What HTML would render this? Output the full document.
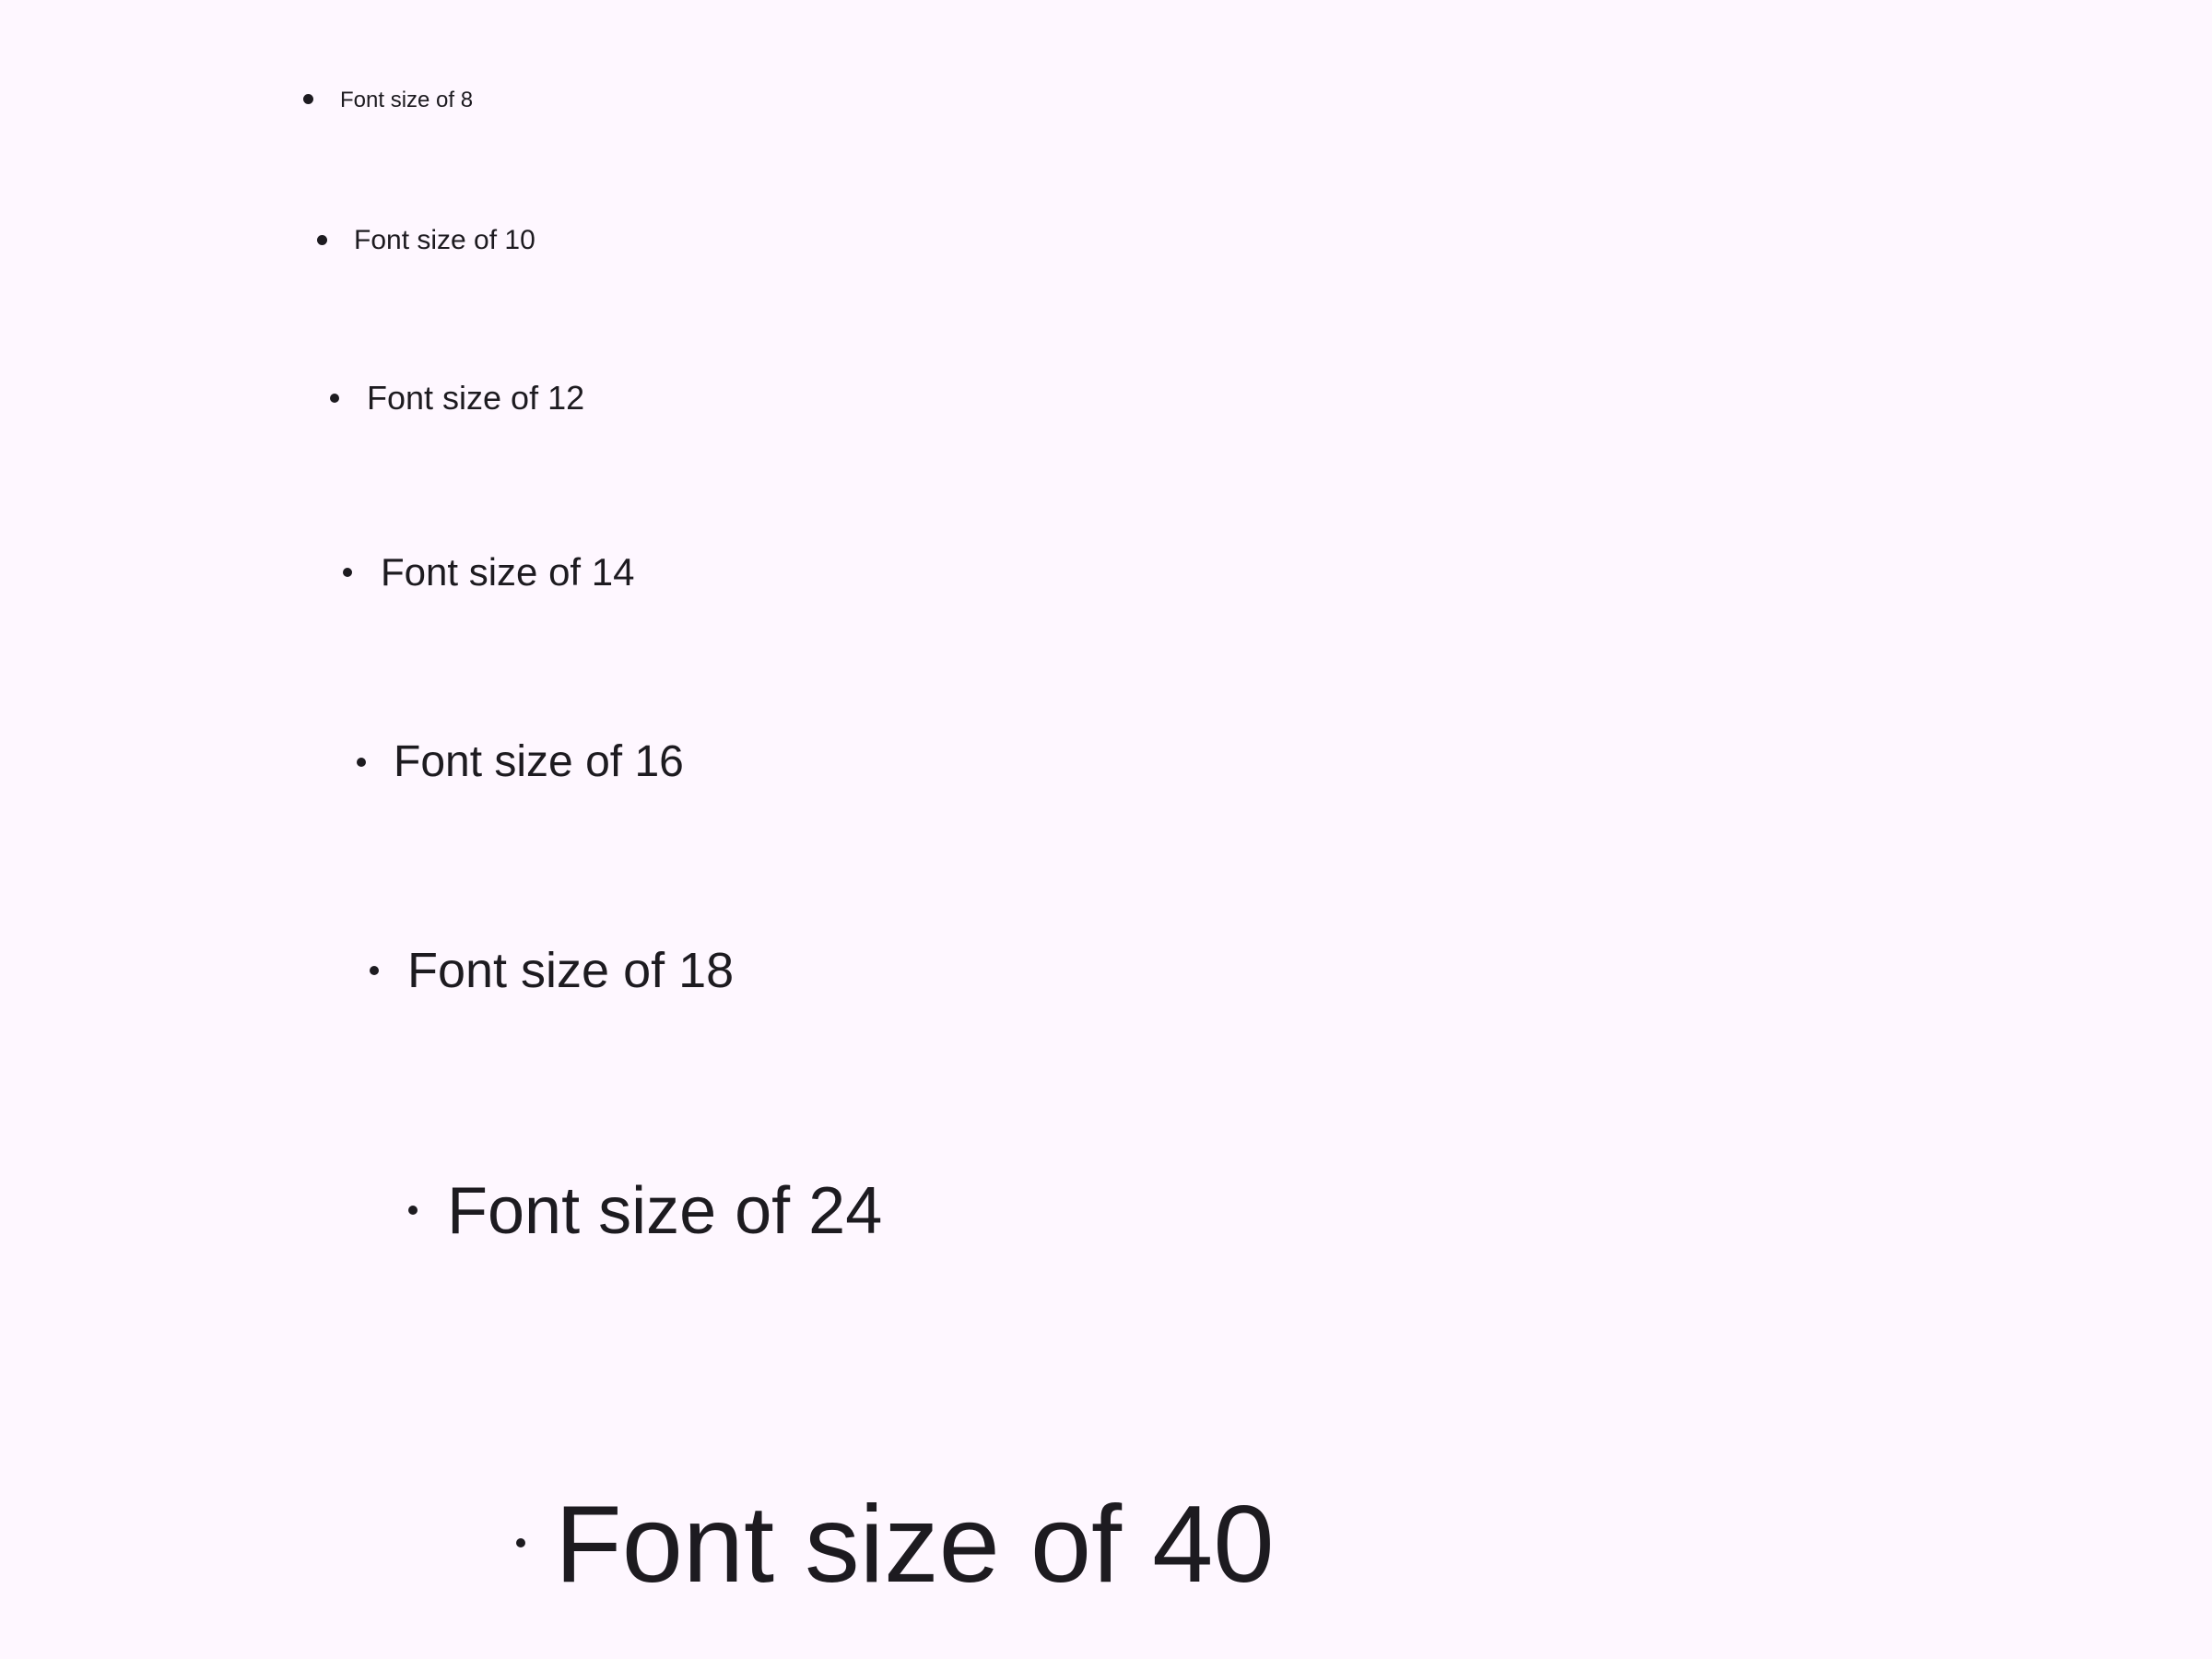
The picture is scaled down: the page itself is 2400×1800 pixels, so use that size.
<!DOCTYPE html>
<html><head><meta charset="utf-8"><style>
html,body{margin:0;padding:0;width:2400px;height:1800px;background:#fef7ff;overflow:hidden}
.t{position:absolute;font-family:"Liberation Sans",sans-serif;color:#1d1b20;line-height:1;white-space:nowrap}
.d{position:absolute;border-radius:50%;background:#1d1b20}
</style></head><body>
<div class="d" style="left:329px;top:102px;width:11px;height:11px"></div>
<div class="t" style="left:369px;top:97px;font-size:24px">Font size of 8</div>

<div class="d" style="left:344px;top:255px;width:11px;height:11px"></div>
<div class="t" style="left:384px;top:246px;font-size:30px">Font size of 10</div>

<div class="d" style="left:358px;top:427px;width:10px;height:10px"></div>
<div class="t" style="left:398px;top:414px;font-size:36px">Font size of 12</div>

<div class="d" style="left:372px;top:616px;width:10px;height:10px"></div>
<div class="t" style="left:413px;top:600px;font-size:42px">Font size of 14</div>

<div class="d" style="left:387px;top:822px;width:10px;height:10px"></div>
<div class="t" style="left:427px;top:803px;font-size:48px">Font size of 16</div>

<div class="d" style="left:401px;top:1048px;width:10px;height:10px"></div>
<div class="t" style="left:442px;top:1026px;font-size:54px">Font size of 18</div>

<div class="d" style="left:443px;top:1308px;width:10px;height:10px"></div>
<div class="t" style="left:485px;top:1278px;font-size:72px">Font size of 24</div>

<div class="d" style="left:560px;top:1669px;width:10px;height:10px"></div>
<div class="t" style="left:602px;top:1616px;font-size:119px">Font size of 40</div>
</body></html>
